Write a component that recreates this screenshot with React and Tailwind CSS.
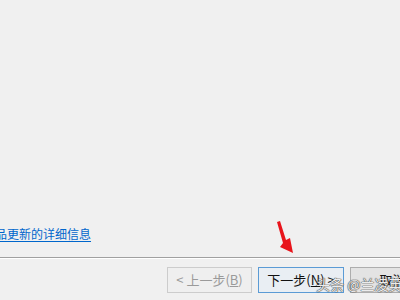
import React from "react"

const font = { fontFamily: '"Noto Sans CJK SC", "Noto Sans", sans-serif' }

const Arrow = () => (
  <svg className="absolute left-[272px] top-[218px]" width="28" height="40" viewBox="0 0 28 40">
    <polygon points="5,4 8,3 14,22 18,20 21,35 8,29 11,25" fill="#e8141b" />
  </svg>
)

export default function App() {
  return (
    <div
      className="relative w-[400px] h-[300px] bg-[#f0f0f0] flex flex-col overflow-hidden text-[12px]"
      style={font}
    >
      <div className="flex-1 flex items-end pb-[15px]">
        <a
          href="#"
          className="ml-[-17px] leading-[16px] text-[#0066cc] underline underline-offset-2 whitespace-nowrap"
        >
          产品更新的详细信息
        </a>
      </div>

      <div className="h-px bg-[#a0a0a0]" />
      <div className="h-px bg-white" />

      <div className="flex gap-[6px] pl-[167px] pt-[8px] pb-[7px] overflow-hidden text-[13px]">
        <button
          disabled
          className="shrink-0 w-[85px] h-[26px] bg-[#efefef] border border-[#cccccc] text-[#9a9a9a] flex items-center justify-center"
        >
          &lt; 上一步(<span className="underline">B</span>)
        </button>
        <button className="shrink-0 w-[86px] h-[26px] bg-[#e9eef3] border border-[#5b9bd5] text-[#111] flex items-center justify-center">
          下一步(<span className="underline">N</span>) &gt;
        </button>
        <button className="shrink-0 w-[85px] h-[26px] bg-[#e3e3e3] border border-[#adadad] text-[#111] flex items-center justify-center">
          取消
        </button>
      </div>

      <Arrow />

      <div
        className="absolute left-[316px] top-[274px] text-[14px] text-white/90 whitespace-nowrap"
        style={{ textShadow: "0 0 1px #444, 0 0 1px #444, 0 0 1px #444" }}
      >
        头条 @兰凌英
      </div>
    </div>
  )
}
